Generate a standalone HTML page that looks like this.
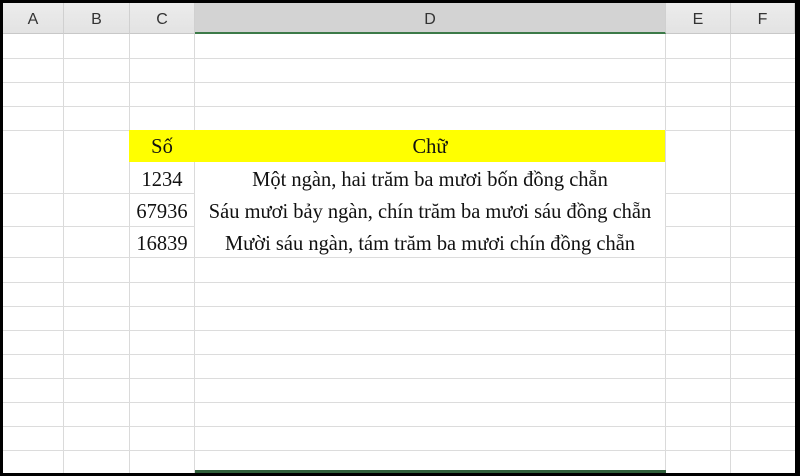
<!DOCTYPE html>
<html><head><meta charset="utf-8"><style>
*{margin:0;padding:0;box-sizing:border-box}
body{width:800px;height:476px;background:#000;position:relative;overflow:hidden}
#s{position:absolute;left:3px;top:3px;width:792px;height:470px;background:#fff;overflow:hidden}
.h{position:absolute;top:0;height:31px;background:linear-gradient(#ececec,#e3e3e3);border-right:1px solid #d0d0d0;border-bottom:1px solid #c8c8c8;font:16px "Liberation Sans",sans-serif;color:#333;text-align:center;line-height:34px}
.hl{position:absolute;left:0;width:792px;height:1px;background:#dcdcdc}
.vl{position:absolute;top:31px;width:1px;height:440px;background:#dadada}
.t{position:absolute;font:21px "Liberation Serif",serif;color:#111;text-align:center;white-space:nowrap;transform:scaleX(0.975)}
</style></head><body><div id="s">
<div class="vl" style="left:60px"></div>
<div class="vl" style="left:126px"></div>
<div class="vl" style="left:191px"></div>
<div class="vl" style="left:662px"></div>
<div class="vl" style="left:727px"></div>
<div class="hl" style="top:55px"></div>
<div class="hl" style="top:79px"></div>
<div class="hl" style="top:103px"></div>
<div class="hl" style="top:127px"></div>
<div class="hl" style="top:190px"></div>
<div class="hl" style="top:223px"></div>
<div class="hl" style="top:254px"></div>
<div class="hl" style="top:279px"></div>
<div class="hl" style="top:303px"></div>
<div class="hl" style="top:327px"></div>
<div class="hl" style="top:351px"></div>
<div class="hl" style="top:375px"></div>
<div class="hl" style="top:399px"></div>
<div class="hl" style="top:423px"></div>
<div class="hl" style="top:447px"></div>
<div style="position:absolute;left:192px;top:160px;width:470px;height:94px;background:#fff"></div>
<div style="position:absolute;left:126px;top:127px;width:536px;height:32px;background:#ffff00"></div>
<div class="h" style="left:0;width:61px">A</div>
<div class="h" style="left:61px;width:66px">B</div>
<div class="h" style="left:127px;width:65px">C</div>
<div class="h" style="left:192px;width:471px;background:#d3d3d3;border-bottom:2px solid #3c7a48">D</div>
<div class="h" style="left:663px;width:65px">E</div>
<div class="h" style="left:728px;width:64px">F</div>
<div style="position:absolute;left:192px;top:467px;width:471px;height:3px;background:#2f5f3a"></div>
<div class="t" style="left:126px;width:66px;top:131px">Số</div>
<div class="t" style="left:192px;width:470px;top:131px">Chữ</div>
<div class="t" style="left:126px;width:66px;top:164px">1234</div>
<div class="t" style="left:192px;width:470px;top:164px">Một ngàn, hai trăm ba mươi bốn đồng chẵn</div>
<div class="t" style="left:126px;width:66px;top:196px">67936</div>
<div class="t" style="left:192px;width:470px;top:196px">Sáu mươi bảy ngàn, chín trăm ba mươi sáu đồng chẵn</div>
<div class="t" style="left:126px;width:66px;top:228px">16839</div>
<div class="t" style="left:192px;width:470px;top:228px">Mười sáu ngàn, tám trăm ba mươi chín đồng chẵn</div>
</div></body></html>
